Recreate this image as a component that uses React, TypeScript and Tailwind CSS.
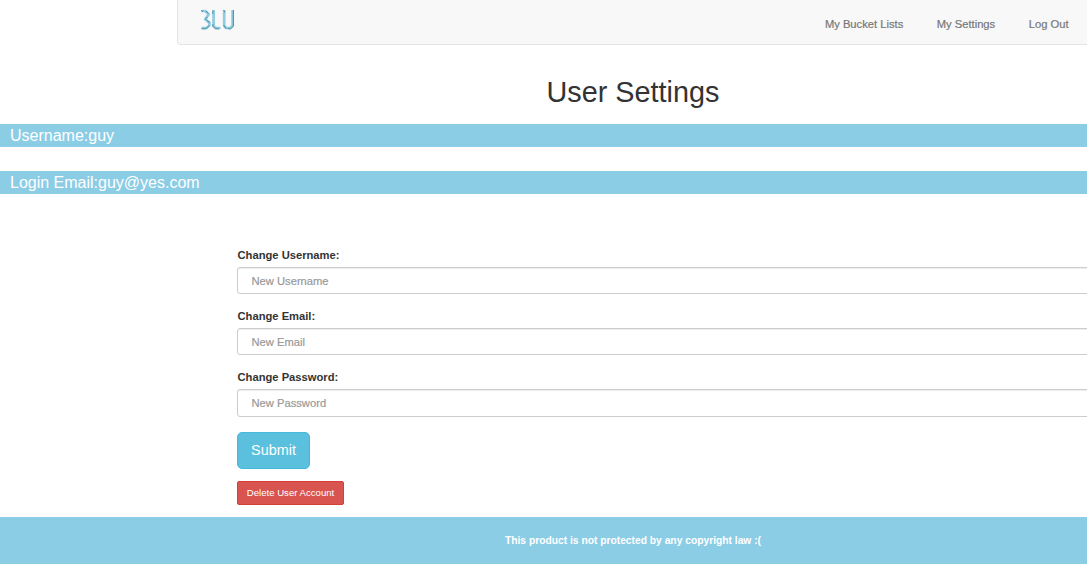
import React from "react";

const navItems = ["My Bucket Lists", "My Settings", "Log Out"];

const fields = [
  { id: "username", label: "Change Username:", placeholder: "New Username", type: "text", box: "h-[27px] mb-[14px]" },
  { id: "email", label: "Change Email:", placeholder: "New Email", type: "email", box: "h-[27px] mb-[14px]" },
  { id: "password", label: "Change Password:", placeholder: "New Password", type: "password", box: "h-[28px] mb-[15px]" },
];

function Logo() {
  return (
    <svg className="block h-[24px] w-[38px]" viewBox="0 0 38 24" fill="none" aria-label="BLU">
      <g stroke="#8fcbe0" strokeWidth="2.7" strokeLinejoin="round">
        <path d="M2.5 3H6L9.8 6.3L6.2 11.2L10.4 14.8V17.5L7.5 20H2.5" />
        <path d="M14.6 2V18L16.8 20H21.5" />
        <path d="M25.2 2V18L27.2 20H31.2L33.6 18V2" />
      </g>
      <g stroke="#4b8198" strokeWidth="1" strokeLinejoin="round" strokeOpacity="0.85">
        <path d="M2 2.4L4 3.8M7 3L9.3 5M6 11.6L8.6 9M7.5 12L10.8 14.5M10.3 17.5L7 20.8H2.5" />
        <path d="M13.8 2.5V6M13.8 16V18.2L16.4 20.8H20" />
        <path d="M24.6 2L26 4.5M24.6 17L27 20.6M29 20.8H31.5L34.4 18.2V2" />
      </g>
    </svg>
  );
}

function InfoBar({ children }: { children: React.ReactNode }) {
  return (
    <p className="h-[23px] bg-[#8ccde6] pl-[10px] text-[16px] leading-[23px] text-white">{children}</p>
  );
}

export default function App() {
  return (
    <div className="h-[567px] w-full overflow-hidden bg-white font-['Liberation_Sans',Arial,sans-serif] text-[#333]">
      <div className="flex w-[1266px] flex-col">
        <nav className="ml-[177px] flex h-[45px] w-[912px] justify-between rounded-b-[4px] border border-t-0 border-[#e4e4e4] bg-[#f8f8f8]">
          <a href="#" className="ml-[21px] mt-[8px]">
            <Logo />
          </a>
          <ul className="mr-[19.5px] flex gap-[33.5px] pt-[16px] text-[11.2px] leading-[16px] text-[#777] [-webkit-text-stroke:0.2px_#777]">
            {navItems.map((item) => (
              <li key={item}>
                <a href="#">{item}</a>
              </li>
            ))}
          </ul>
        </nav>

        <h1 className="mt-[31px] text-center text-[28.8px] leading-[32px]">User Settings</h1>

        <div className="mt-[16px] flex flex-col gap-[24px]">
          <InfoBar>Username:guy</InfoBar>
          <InfoBar>Login Email:guy@yes.com</InfoBar>
        </div>

        <form className="ml-[237px] mt-[53px] flex w-[900px] flex-col items-start">
          {fields.map((field) => (
            <React.Fragment key={field.id}>
              <label htmlFor={field.id} className="mb-[4px] h-[16px] pl-[0.5px] text-[11.2px] font-bold leading-[16px]">
                {field.label}
              </label>
              <input
                id={field.id}
                type={field.type}
                placeholder={field.placeholder}
                className={`${field.box} w-full rounded-[3px] border border-[#ccc] bg-white px-[13.5px] text-[11.2px] shadow-[inset_0_1px_1px_rgba(0,0,0,0.075)] placeholder:text-[#999] placeholder:[-webkit-text-stroke:0.2px_#999]`}
              />
            </React.Fragment>
          ))}
          <button
            type="button"
            className="h-[37px] w-[73px] rounded-[5px] border border-[#46b8da] bg-[#5bc0de] pb-[2px] text-[14.4px] leading-[20px] text-white"
          >
            Submit
          </button>
          <button
            type="button"
            className="mt-[12px] h-[24px] w-[107px] whitespace-nowrap rounded-[2px] border border-[#d43f3a] bg-[#d9534f] text-[9.6px] leading-[14px] text-white"
          >
            Delete User Account
          </button>
        </form>

        <footer className="mt-[12px] h-[47px] bg-[#8ccde6] pt-[16px] text-center text-[10.27px] font-bold leading-[16px] text-white">
          This product is not protected by any copyright law :(
        </footer>
      </div>
    </div>
  );
}
